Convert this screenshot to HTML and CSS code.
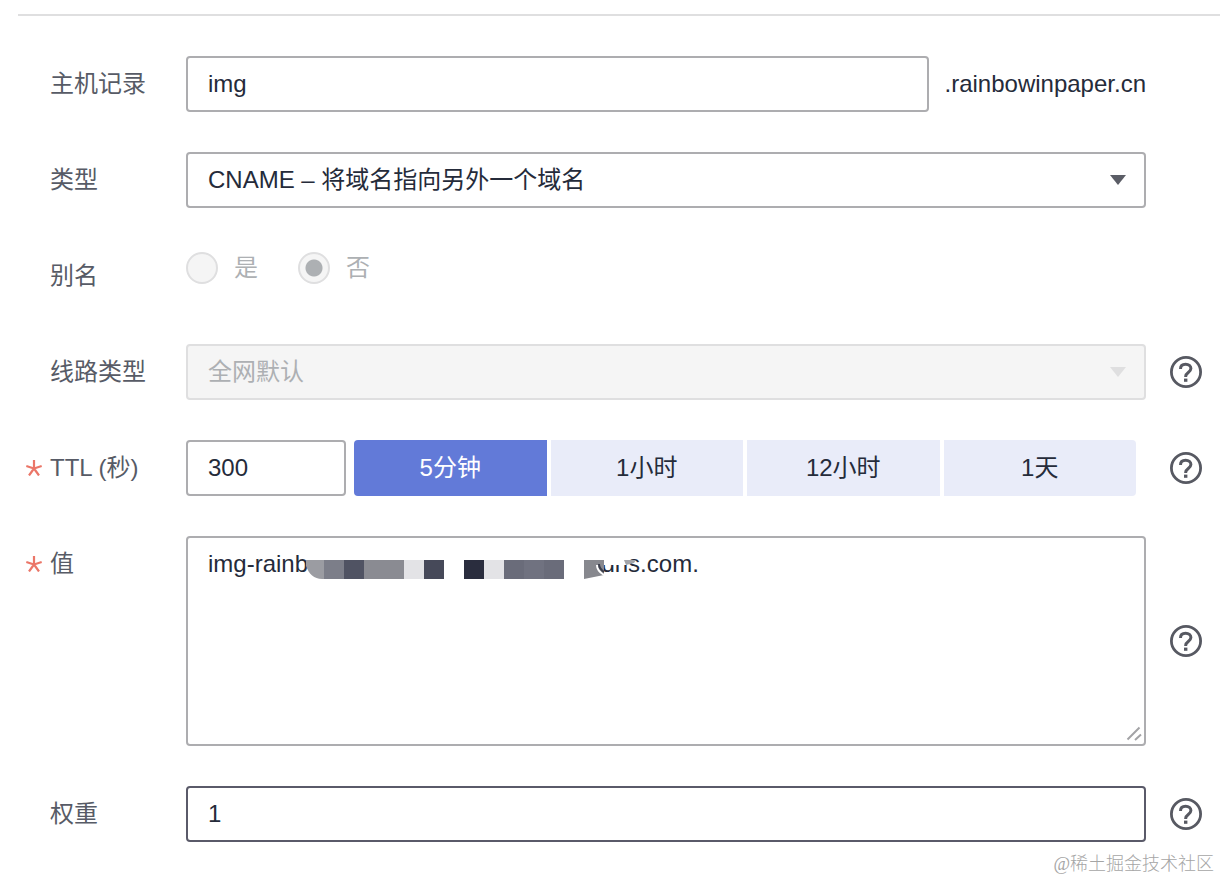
FILE: index.html
```html
<!DOCTYPE html>
<html lang="zh-CN">
<head>
  <meta charset="UTF-8" />
  <meta name="viewport" content="width=device-width, initial-scale=1.0" />
  <title>添加记录集</title>
  <link rel="stylesheet" href="styles.css">
</head>
<body>
  <svg class="symbols" aria-hidden="true">
    <symbol id="help" viewBox="0 0 32 32">
      <circle cx="16" cy="16" r="14.6" fill="none" stroke="currentColor" stroke-width="2.8" />
      <path d="M10.500 13C10.500 10 12.500 8.300 15.600 8.300c3.200 0 5.300 1.700 5.300 4.300 0 3.700-5.200 4-5.200 7.600v0.800" fill="none" stroke="currentColor" stroke-width="3" />
      <path d="M14 22.600h3.400v3.200h-3.400z" fill="currentColor" />
    </symbol>
    <symbol id="star" viewBox="0 0 16 16">
      <path d="M8 8.500V0M8 8.500L0.300 6M8 8.500L15.700 6M8 8.500L3 15.500M8 8.500L13 15.500" fill="none" stroke="currentColor" stroke-width="2.2" />
    </symbol>
    <symbol id="arrow" viewBox="0 0 16 10">
      <path d="M0 0h16L8 10z" fill="currentColor" />
    </symbol>
  </svg>

  <hr class="divider">

  <form class="form">
    <div class="row">
      <label class="label" for="host">主机记录</label>
      <div class="field">
        <input class="control" id="host" type="text" value="img">
        <span class="suffix">.rainbowinpaper.cn</span>
      </div>
    </div>

    <div class="row">
      <label class="label" for="type">类型</label>
      <div class="field">
        <select class="control" id="type">
          <option>CNAME – 将域名指向另外一个域名</option>
        </select>
        <svg class="arrow"><use href="#arrow" /></svg>
      </div>
    </div>

    <div class="row">
      <span class="label" id="aliasLabel">别名</span>
      <div class="field radios" role="radiogroup" aria-labelledby="aliasLabel">
        <label class="radio"><input type="radio" name="alias" disabled>是</label>
        <label class="radio"><input type="radio" name="alias" checked disabled>否</label>
      </div>
    </div>

    <div class="row">
      <label class="label" for="line">线路类型</label>
      <div class="field">
        <select class="control" id="line" disabled>
          <option>全网默认</option>
        </select>
        <svg class="arrow arrow-off"><use href="#arrow" /></svg>
      </div>
      <svg class="help"><use href="#help" /></svg>
    </div>

    <div class="row">
      <svg class="star"><use href="#star" /></svg>
      <label class="label" for="ttl">TTL (秒)</label>
      <div class="field ttl">
        <input class="control ttl-input" id="ttl" type="text" value="300">
        <div class="segments">
          <button type="button" class="segment active">5分钟</button>
          <button type="button" class="segment">1小时</button>
          <button type="button" class="segment">12小时</button>
          <button type="button" class="segment">1天</button>
        </div>
      </div>
      <svg class="help"><use href="#help" /></svg>
    </div>

    <div class="row">
      <svg class="star"><use href="#star" /></svg>
      <label class="label" for="value">值</label>
      <div class="field">
        <textarea class="control area" id="value">img-rainb                                            dns.com.</textarea>
        <!-- masked part of the domain -->
        <svg class="mask" viewBox="0 0 332 30" aria-hidden="true">
          <path d="M0 8h18v19h-2C8 27 3 22 0 14z" fill="#9b9ca2" />
          <path d="M18 8h20v19H18z" fill="#7c7e89" />
          <path d="M38 8h20v19H38z" fill="#505363" />
          <path d="M58 8h40v19H58z" fill="#8a8b92" />
          <path d="M98 8h20v19H98z" fill="#e3e3e6" />
          <path d="M118 8h20v19h-20z" fill="#464959" />
          <path d="M158 8h20v19h-20z" fill="#2a2d3e" />
          <path d="M178 8h20v19h-20z" fill="#e3e3e6" />
          <path d="M198 8h60v19h-60z" fill="#6a6c7a" />
          <path d="M218 8h20v19h-20z" fill="#707280" />
          <path d="M292 0h29v13h-29z" fill="#fff" />
          <path d="M278 8h20v15l-20 4z" fill="#87888e" />
          <path d="M291 13c0 4 2 7 7 10" fill="none" stroke="#fff" stroke-width="2" />
          <path d="M293 12c0 3 2 6 5 8" fill="none" stroke="#3b3e4b" stroke-width="2" />
          <path d="M318 8h12l-2 3-8 2z" fill="#a3a4a9" />
        </svg>
        <svg class="grip" viewBox="0 0 16 16" aria-hidden="true">
          <path d="M1.500 13.500L13.500 1.500M9 14L15 8.500" fill="none" stroke="#a3a3a6" stroke-width="2" />
        </svg>
      </div>
      <svg class="help"><use href="#help" /></svg>
    </div>

    <div class="row">
      <label class="label" for="weight">权重</label>
      <div class="field">
        <input class="control hovered" id="weight" type="text" value="1">
      </div>
      <svg class="help"><use href="#help" /></svg>
    </div>
  </form>

  <div class="watermark">@稀土掘金技术社区</div>
</body>
</html>
```
FILE: styles.css
```css
* {
  box-sizing: border-box;
}

body {
  margin: 0;
  padding-top: 14px;
  background: #fff;
  color: #252b3a;
  font-family: "Liberation Sans", "Noto Sans CJK SC", sans-serif;
  font-size: 24px;
  line-height: 36px;
}

.symbols {
  display: none;
}

.divider {
  height: 2px;
  margin: 0 0 40px 18px;
  border: none;
  background: #dfdfe0;
}

.form {
  display: flex;
  flex-direction: column;
  gap: 40px;
  padding: 0 18px 0 26px;
}

.row {
  display: grid;
  grid-template-columns: 16px 128px 1fr 32px;
  column-gap: 8px;
}

.label {
  grid-column: 2;
  padding-top: 10px;
  color: #575b66;
}

.star {
  grid-column: 1;
  width: 16px;
  height: 16px;
  margin-top: 20px;
  color: #eb7668;
}

.field {
  grid-column: 3;
  position: relative;
  display: flex;
  align-items: center;
  min-height: 56px;
  margin-right: 16px;
}

.control {
  flex: 1;
  min-width: 0;
  height: 56px;
  padding: 0 20px;
  border: 2px solid #adadb0;
  border-radius: 4px;
  background: #fff;
  color: #252b3a;
  font: inherit;
  appearance: none;
  outline: none;
}

.control:disabled {
  border-color: #dfdfe0;
  background: #f5f5f5;
  color: #adb0b3;
  opacity: 1;
}

.hovered {
  border-color: #5a5a69;
}

.suffix {
  margin-left: 16px;
}

.arrow {
  position: absolute;
  top: 23px;
  right: 20px;
  width: 16px;
  height: 10px;
  color: #5b5d66;
  pointer-events: none;
}

.arrow-off {
  color: #dfdfe0;
}

.radios {
  align-items: flex-start;
  gap: 40px;
  padding-top: 2px;
}

.radio {
  display: flex;
  align-items: center;
  gap: 16px;
  color: #adb0b3;
}

.radio input {
  width: 32px;
  height: 32px;
  margin: 0;
  border: 2px solid #dfdfe0;
  border-radius: 50%;
  background: #f5f5f5;
  appearance: none;
}

.radio input:checked {
  background: radial-gradient(circle, #adb0b3 8px, #f5f5f5 9px);
}

.help {
  grid-column: 4;
  align-self: center;
  width: 32px;
  height: 32px;
  color: #575962;
}

.ttl {
  gap: 8px;
}

.ttl-input {
  flex: none;
  width: 160px;
}

.segments {
  flex: 1;
  display: flex;
  gap: 4px;
  margin-right: 10px;
}

.segment {
  flex: 1;
  height: 56px;
  padding: 0;
  border: none;
  background: #e9ecf9;
  color: #252b3a;
  font: inherit;
  cursor: pointer;
}

.segment:first-child {
  border-radius: 4px 0 0 4px;
}

.segment:last-child {
  border-radius: 0 4px 4px 0;
}

.segment.active {
  background: #627ad8;
  color: #fff;
}

.area {
  height: 210px;
  padding: 8px 20px;
  resize: none;
}

.mask {
  position: absolute;
  top: 16px;
  left: 120px;
  width: 332px;
  height: 30px;
  pointer-events: none;
}

.grip {
  position: absolute;
  right: 4px;
  bottom: 4px;
  width: 16px;
  height: 16px;
  pointer-events: none;
}

.watermark {
  position: absolute;
  right: 6px;
  bottom: 4px;
  color: #a5a5a5;
  font-family: "Liberation Serif", "Noto Sans CJK SC", serif;
  font-size: 18px;
  font-weight: 300;
  line-height: 24px;
}
```
